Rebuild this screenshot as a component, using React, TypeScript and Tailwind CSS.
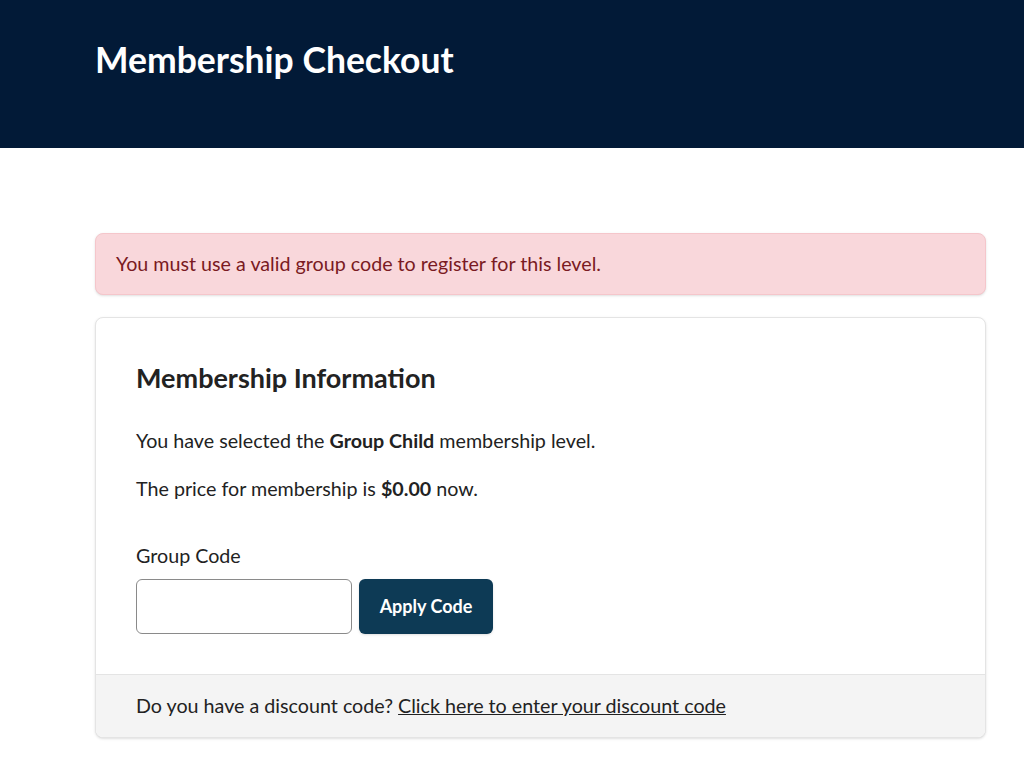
export default function App() {
  return (
    <div className="min-h-[762px] bg-white font-['Lato','Liberation_Sans',sans-serif] text-[#222]">
      <header className="h-[148px] bg-[#021a37] px-[95px] pt-[37px]">
        <h1 className="text-[35.5px] font-bold leading-[46px] text-white">Membership Checkout</h1>
      </header>

      <main className="px-[95px] pt-[85px] pr-[38px]">
        <div className="flex h-[62px] items-center rounded-lg border border-[#f5c6cb] bg-[#f9d7db] px-[20px] text-[19.7px] text-[#7a1a22] shadow-sm">
          You must use a valid group code to register for this level.
        </div>

        <div className="mt-[22px] overflow-hidden rounded-lg border border-[#e4e4e4] bg-white shadow-sm">
          <div className="px-[40px] pt-[44px] pb-[40px]">
            <h2 className="text-[27px] font-bold leading-[32px] text-[#222]">Membership Information</h2>
            <p className="mt-[33px] text-[19.7px] leading-[28px]">
              You have selected the <strong>Group Child</strong> membership level.
            </p>
            <p className="mt-[20px] text-[19.7px] leading-[28px]">
              The price for membership is <strong>$0.00</strong> now.
            </p>

            <label className="mt-[39px] block text-[19.7px] leading-[28px]">Group Code</label>
            <div className="mt-[9px] flex gap-[7px]">
              <input
                type="text"
                className="h-[55px] w-[216px] rounded-md border border-[#8a8a8a] bg-white px-3 text-[18px] outline-none"
              />
              <button className="h-[55px] w-[134px] rounded-md bg-[#0d3a55] text-[18px] font-bold text-white shadow-sm">
                Apply Code
              </button>
            </div>
          </div>
          <div className="flex h-[63px] items-center border-t border-[#e4e4e4] bg-[#f4f4f4] px-[40px] text-[19.7px]">
            <span>
              Do you have a discount code?{' '}
              <a href="#" className="underline">Click here to enter your discount code</a>
            </span>
          </div>
        </div>
      </main>
    </div>
  );
}
